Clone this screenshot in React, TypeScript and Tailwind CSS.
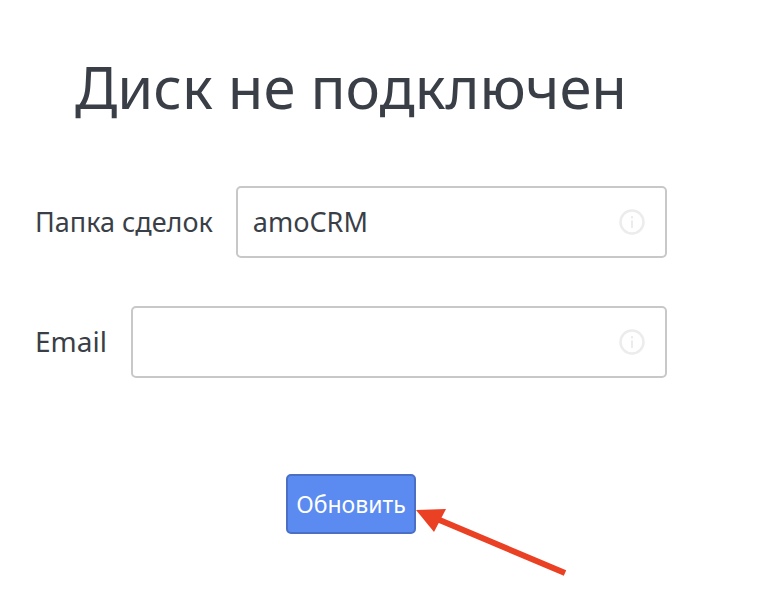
function InfoIcon() {
  return (
    <svg width="28" height="28" viewBox="0 0 28 28" fill="none" className="absolute right-[19px] top-[20px]">
      <circle cx="14" cy="14" r="11.5" stroke="#ececec" strokeWidth="2.5" />
      <rect x="13" y="12.5" width="2" height="7.5" fill="#ececec" />
      <rect x="13" y="8" width="2" height="2.5" fill="#ececec" />
    </svg>
  );
}

function Field(props: { label: string; value?: string; labelClass: string }) {
  return (
    <div className="flex w-[632px] items-center">
      <label className={`pb-[2px] leading-none text-[#3a3f47] ${props.labelClass}`}>{props.label}</label>
      <div className="relative flex h-[72px] flex-1 items-center rounded-[5px] border-2 border-[#c8c8c8] bg-white pl-[15px] text-[27px] text-[#3a3f47]">
        {props.value}
        <InfoIcon />
      </div>
    </div>
  );
}

export default function App() {
  return (
    <div className="relative h-[594px] w-[764px] overflow-hidden bg-white font-['Noto_Sans',sans-serif]">
      <div className="pl-[35px] pt-[47px]">
        <h1 className="ml-[40px] text-[58px] leading-[80px] text-[#3a3f47]">Диск не подключен</h1>
        <div className="mt-[59px] flex flex-col gap-[48px]">
          <Field label="Папка сделок" value="amoCRM" labelClass="mr-[23px] text-[27px]" />
          <Field label="Email" labelClass="mr-[24px] text-[28px]" />
        </div>
        <div className="mt-[96px] ml-[251px]">
          <button className="h-[60px] w-[130px] rounded-[5px] border-2 border-[#4a6fc4] bg-[#5b8bf0] text-[23px] text-white">
            Обновить
          </button>
        </div>
      </div>
      <svg width="180" height="80" viewBox="0 0 180 80" className="absolute left-[410px] top-[500px]">
        <line x1="155" y1="73" x2="20" y2="16" stroke="#ea4023" strokeWidth="6" />
        <polygon points="6,10 36,9 24,32" fill="#ea4023" />
      </svg>
    </div>
  );
}
